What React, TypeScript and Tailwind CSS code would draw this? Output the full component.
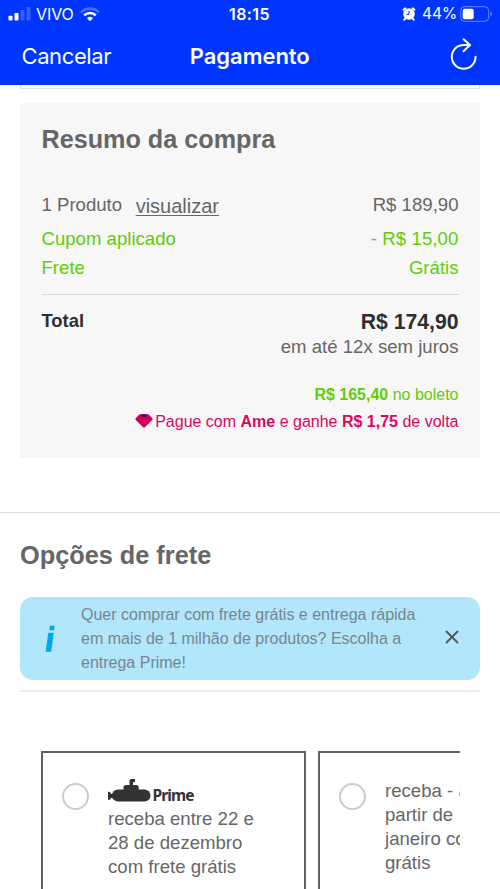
import { X } from "lucide-react";
import { useState } from "react";

interface ShippingOption {
  id: string;
  prime: boolean;
  lines: string[];
}

const shippingOptions: ShippingOption[] = [
  {
    id: "prime",
    prime: true,
    lines: ["receba entre 22 e", "28 de dezembro", "com frete grátis"],
  },
  {
    id: "standard",
    prime: false,
    lines: ["receba - a", "partir de", "janeiro com", "grátis"],
  },
];

function StatusBar() {
  return (
    <div className="grid h-7 grid-cols-[1fr_auto_1fr] items-center pl-2 pr-[7px] leading-7">
      <div className="flex items-center">
        <svg width="23" height="14" viewBox="0 0 23 14" fill="#fff">
          <rect x="0.5" y="8.7" width="4" height="4.8" rx="0.8" />
          <rect x="6.5" y="6" width="4" height="7.5" rx="0.8" />
          <rect x="12.5" y="3" width="4" height="10.5" rx="0.8" opacity="0.22" />
          <rect x="18.5" y="0" width="4" height="13.5" rx="0.8" opacity="0.22" />
        </svg>
        <span className="ml-[5px] w-[38px] text-[16px] tracking-[-0.1px]">VIVO</span>
        <svg className="ml-[6px]" width="20" height="15" viewBox="0 0 20 15" fill="none" stroke="#fff">
          <path d="M1 5.2a13 13 0 0 1 18 0" strokeWidth="2.6" opacity="0.28" />
          <path d="M4.2 8.3a8.5 8.5 0 0 1 11.6 0" strokeWidth="2.6" />
          <path d="M7 11.2a4.3 4.3 0 0 1 6 0l-3 3.1z" fill="#fff" stroke="none" />
        </svg>
      </div>
      <span className="-ml-[2px] text-[16px] font-semibold tracking-[0.4px]">18:15</span>
      <div className="flex items-center justify-end">
        <svg width="14" height="14" viewBox="0 0 14 14">
          <path d="M1.6 2.8 3.2 1.4M12.4 2.8 10.8 1.4M3.2 11.6l-1 1.2M10.8 11.6l1 1.2" stroke="#fff" strokeWidth="2" strokeLinecap="round" />
          <circle cx="7" cy="7" r="5.8" fill="#fff" />
          <path d="M7 3.8v3.6H4.4" fill="none" stroke="#0034ff" strokeWidth="1" />
        </svg>
        <span className="ml-[6px] w-[35px] text-[15.5px]">44%</span>
        <svg className="ml-[3px] mt-[-1px]" width="33" height="16" viewBox="0 0 33 16">
          <rect x="0.7" y="0.7" width="28" height="14.6" rx="4" fill="none" stroke="#fff" strokeOpacity="0.4" />
          <rect x="2.7" y="2.7" width="11" height="10.6" rx="2" fill="#fff" />
          <path d="M30.5 5.6c2 .8 2 4 0 4.8z" fill="#fff" opacity="0.4" />
        </svg>
      </div>
    </div>
  );
}

function NavBar() {
  return (
    <div className="grid h-[55px] grid-cols-[1fr_auto_1fr] items-center pl-[21.5px] pr-[22px]">
      <button className="text-left text-[22px] leading-7 tracking-[-0.4px]">Cancelar</button>
      <h1 className="text-[22px] font-semibold leading-7 tracking-[-0.05px]">Pagamento</h1>
      <button className="justify-self-end">
        <svg className="mt-[-3px] block" width="28" height="32" viewBox="0 0 28 32" fill="none" stroke="#fff" strokeWidth="2" strokeLinecap="round" strokeLinejoin="round">
          <path d="M25.6 18.8A11.9 11.9 0 1 1 13.7 6.9H19.8" />
          <path d="M13.6 1.2 20 6.900 13.6 13.200" />
        </svg>
      </button>
    </div>
  );
}

function AmeIcon() {
  return (
    <svg className="mr-[2px] mt-[4px]" width="18" height="14" viewBox="0 0 18 14">
      <path d="M5 1.6h8L16.3 5.100 9 12.200 1.700 5.100z" fill="#d1005d" stroke="#d1005d" strokeWidth="2.600" strokeLinejoin="round" />
      <path d="M5.600.3h6.800L10.300 2.800q-1.300 1.100-2.600 0z" fill="#29147a" />
    </svg>
  );
}

function PrimeLogo() {
  return (
    <div className="flex h-[29px] items-start text-[#333]">
      <svg className="shrink-0" width="43" height="24" viewBox="0 0 43 24" fill="#333">
        <rect x="4" y="10.5" width="38.5" height="12" rx="6" />
        <path d="M0 12.5q2.8 0 3.200 2.500L6 14v6l-2.800-1.300Q2.800 21 0 21z" />
        <path d="M15.500 12V8.600q0-2.600 2.600-2.600h10q2.600 0 2.600 2.600v3.400z" />
        <path d="M21.500 7V1.800q0-1.700 1.700-1.700h3.800v2.900H25V7z" />
      </svg>
      <span className="ml-[1.5px] mt-[4px] font-['Noto_Sans',sans-serif] text-[15.5px] font-bold leading-6 tracking-[-0.9px]">Prime</span>
    </div>
  );
}

export default function App() {
  const [selected, setSelected] = useState("");
  const [showBanner, setShowBanner] = useState(true);

  return (
    <div className="h-[889px] w-[500px] overflow-hidden bg-white font-['Liberation_Sans',Arial,sans-serif] text-[#666]">
      <header className="h-[85px] bg-[#0034ff] font-['Inter',sans-serif] text-white">
        <StatusBar />
        <NavBar />
      </header>

      {/* End of the previous block, scrolled under the header */}
      <div className="mx-5 h-1 border-x border-b border-[#e0e0e8]" />

      {/* Purchase summary */}
      <section className="mx-5 mt-[14px] h-[355px] bg-[#f7f7f7] px-[21.5px] pt-[21px]">
        <h2 className="text-[25.2px] font-bold leading-[30px]">Resumo da compra</h2>
        <div className="mt-[37px] text-[18.6px]">
          <div className="flex h-[34px] justify-between leading-[28px]">
            <div className="flex">
              <span>1 Produto</span>
              <a href="#" className="ml-[13.5px] mt-[1px] text-[20px] underline decoration-1 underline-offset-2">visualizar</a>
            </div>
            <span>R$ 189,90</span>
          </div>
          <div className="flex h-[29px] justify-between leading-[28px] text-[#62cc0a]">
            <span>Cupom aplicado</span>
            <span className="tracking-[0.1px]">- R$ 15,00</span>
          </div>
          <div className="flex h-[40px] justify-between leading-[28px] text-[#62cc0a]">
            <span>Frete</span>
            <span>Grátis</span>
          </div>
        </div>
        <div className="flex justify-between border-t border-[#d8d8d8] pt-[13px] text-[#2e2e2e]">
          <span className="text-[18.4px] font-bold leading-[26px]">Total</span>
          <span className="text-[21.2px] font-bold leading-[28px]">R$ 174,90</span>
        </div>
        <p className="text-right text-[18.6px] leading-[22px]">em até 12x sem juros</p>
        <p className="mt-[25px] text-right text-[16px] leading-[24px] text-[#62cc0a]">
          <b>R$ 165,40</b> no boleto
        </p>
        <p className="mt-[3px] flex justify-end text-[16px] leading-[24px] text-[#d9085f]">
          <AmeIcon />
          <span>
            Pague com <b>Ame</b> e ganhe <b>R$ 1,75</b> de volta
          </span>
        </p>
      </section>

      {/* Shipping options */}
      <section className="mt-[54px] border-t border-[#dcdcdc] px-5 pt-[27px]">
        <h2 className="text-[25.3px] font-bold leading-[30px]">Opções de frete</h2>
        {showBanner && (
          <div className="mt-[27px] flex h-[83px] items-center rounded-[13px] bg-[#b2e6fb] text-[#76868e]">
            <div className="flex w-[61px] justify-center">
              <svg width="11" height="28" viewBox="0 0 11 28" fill="#00a8ef">
                <path d="M5 0.7h4.7l-.7 4.600H4.300z" />
                <path d="M3.300 7.800h5.500L6.200 26.800H.6z" />
              </svg>
            </div>
            <p className="w-[350px] whitespace-nowrap pt-[1px] text-[16px] leading-[24px]">
              Quer comprar com frete grátis e entrega rápida
              <br />
              em mais de 1 milhão de produtos? Escolha a
              <br />
              entrega Prime!
            </p>
            <button className="ml-[10px] mt-[-3px]" onClick={() => setShowBanner(false)}>
              <X size={22} strokeWidth={2} className="text-[#555]" />
            </button>
          </div>
        )}
        <div className="mt-[10px] border-t-2 border-[#ececec]" />

        <div className="ml-[21px] mr-5 mt-[59px] flex gap-[12px] overflow-hidden">
          {shippingOptions.map((option) => (
            <label key={option.id} className="flex h-[180px] w-[265px] shrink-0 border-2 border-[#606060] pl-[19px]">
              <input
                type="radio"
                name="shipping"
                checked={selected === option.id}
                onChange={() => setSelected(option.id)}
                className="mt-[30px] size-[27px] shrink-0 appearance-none rounded-full border-[2.5px] border-[#ccc] checked:border-[#0034ff]"
              />
              <div className="ml-[19px] mt-[26px] whitespace-nowrap text-[18.6px] leading-[24px]">
                {option.prime && <PrimeLogo />}
                <div className={option.prime ? "-mt-px" : ""}>
                  {option.lines.map((line) => (
                    <div key={line}>{line}</div>
                  ))}
                </div>
              </div>
            </label>
          ))}
        </div>
      </section>
    </div>
  );
}
